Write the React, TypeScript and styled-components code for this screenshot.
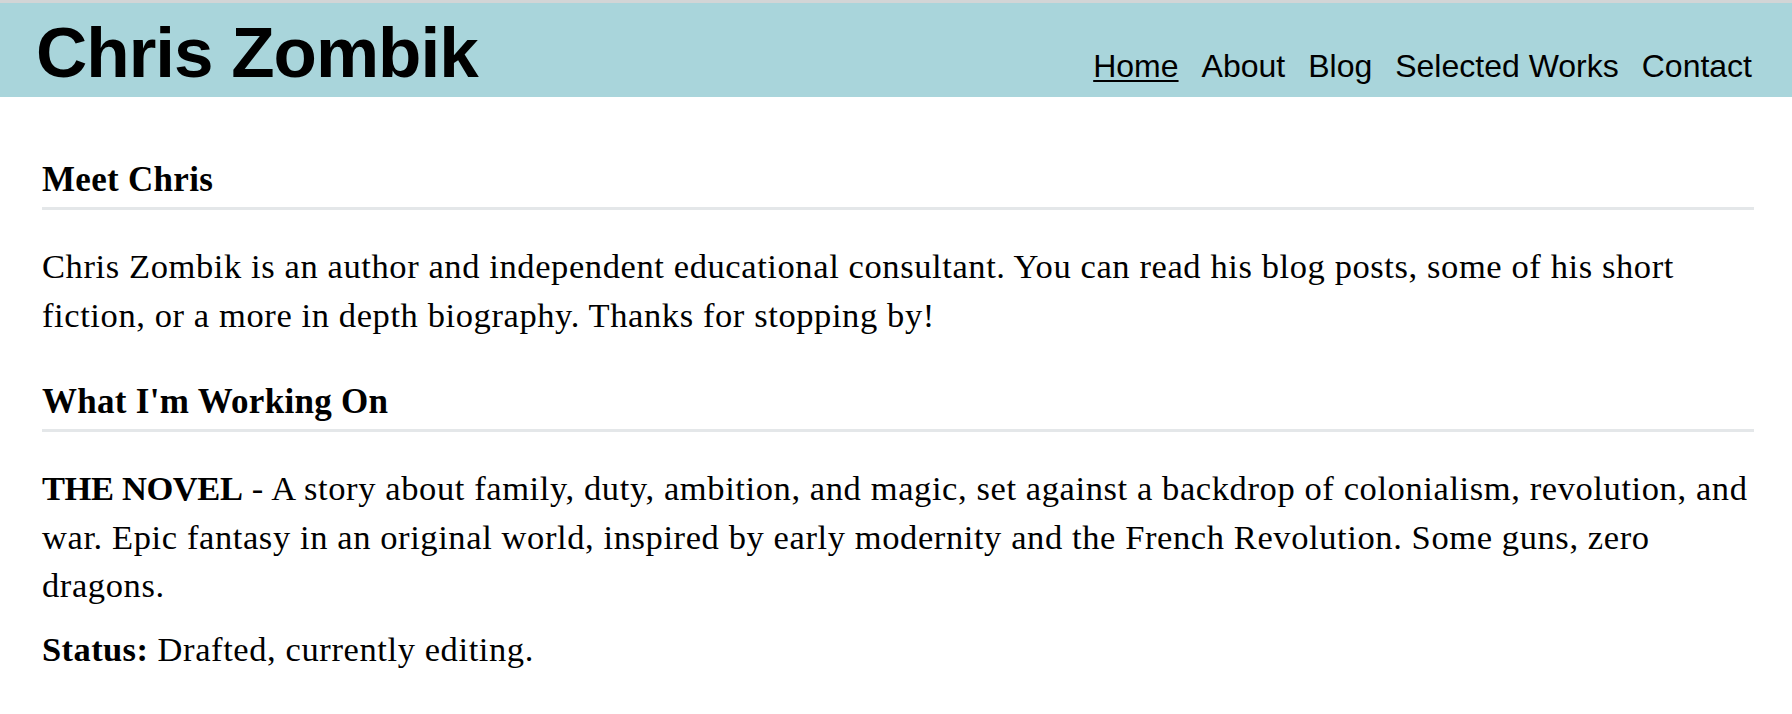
import React from "react";
import styled, { createGlobalStyle } from "styled-components";

const Global = createGlobalStyle`
  html, body {
    margin: 0;
    padding: 0;
    background: #ffffff;
  }
  body {
    font-family: "Liberation Serif", "Times New Roman", serif;
    color: #000000;
  }
  * { box-sizing: border-box; }
`;

const Header = styled.header`
  height: 97px;
  border-top: 3px solid #d2d5d6;
  background: #a9d5db;
  display: flex;
  justify-content: space-between;
  align-items: baseline;
  padding: 14px 40px 0 36px;
`;

const SiteTitle = styled.h1`
  margin: 0;
  font-family: "Liberation Sans", Arial, Helvetica, sans-serif;
  font-weight: 700;
  font-size: 71px;
  line-height: 71px;
  letter-spacing: -1px;
  color: #000;
`;

const Nav = styled.nav`
  display: flex;
  gap: 23px;
  align-items: baseline;
`;

const NavLink = styled.a<{ $active?: boolean }>`
  font-family: "Liberation Sans", Arial, Helvetica, sans-serif;
  font-size: 32px;
  line-height: 40px;
  color: #000;
  text-decoration: ${(p) => (p.$active ? "underline" : "none")};
  text-decoration-thickness: 2px;
  text-underline-offset: 3px;
  cursor: pointer;
`;

const Main = styled.main`
  padding: 20px 38px 40px 42px;
`;

const SectionTitle = styled.h2`
  margin: 42px 0 32px;
  padding-bottom: 6px;
  border-bottom: 3px solid #e4e7e9;
  font-family: "Liberation Serif", "Times New Roman", serif;
  font-weight: 700;
  font-size: 35px;
  line-height: 42px;
  letter-spacing: 0.3px;
`;

const Para = styled.p`
  margin: 15px 0;
  font-size: 34.5px;
  line-height: 48.5px;
  letter-spacing: 0.6px;
`;

const Strong = styled.strong<{ $caps?: boolean }>`
  font-weight: 700;
  letter-spacing: ${(p) => (p.$caps ? "-0.4px" : "0.4px")};
`;

export default function App() {
  const links = ["Home", "About", "Blog", "Selected Works", "Contact"];
  return (
    <>
      <Global />
      <Header>
        <SiteTitle>Chris Zombik</SiteTitle>
        <Nav>
          {links.map((l, i) => (
            <NavLink key={l} $active={i === 0}>
              {l}
            </NavLink>
          ))}
        </Nav>
      </Header>
      <Main>
        <SectionTitle>Meet Chris</SectionTitle>
        <Para>
          Chris Zombik is an author and independent educational consultant. You
          can read his blog posts, some of his short fiction, or a more in depth
          biography. Thanks for stopping by!
        </Para>
        <SectionTitle>What I'm Working On</SectionTitle>
        <Para>
          <Strong $caps>THE NOVEL</Strong> - A story about family, duty,
          ambition, and magic, set against a backdrop of colonialism,
          revolution, and war. Epic fantasy in an original world, inspired by
          early modernity and the French Revolution. Some guns, zero dragons.
        </Para>
        <Para>
          <Strong>Status:</Strong> Drafted, currently editing.
        </Para>
      </Main>
    </>
  );
}
